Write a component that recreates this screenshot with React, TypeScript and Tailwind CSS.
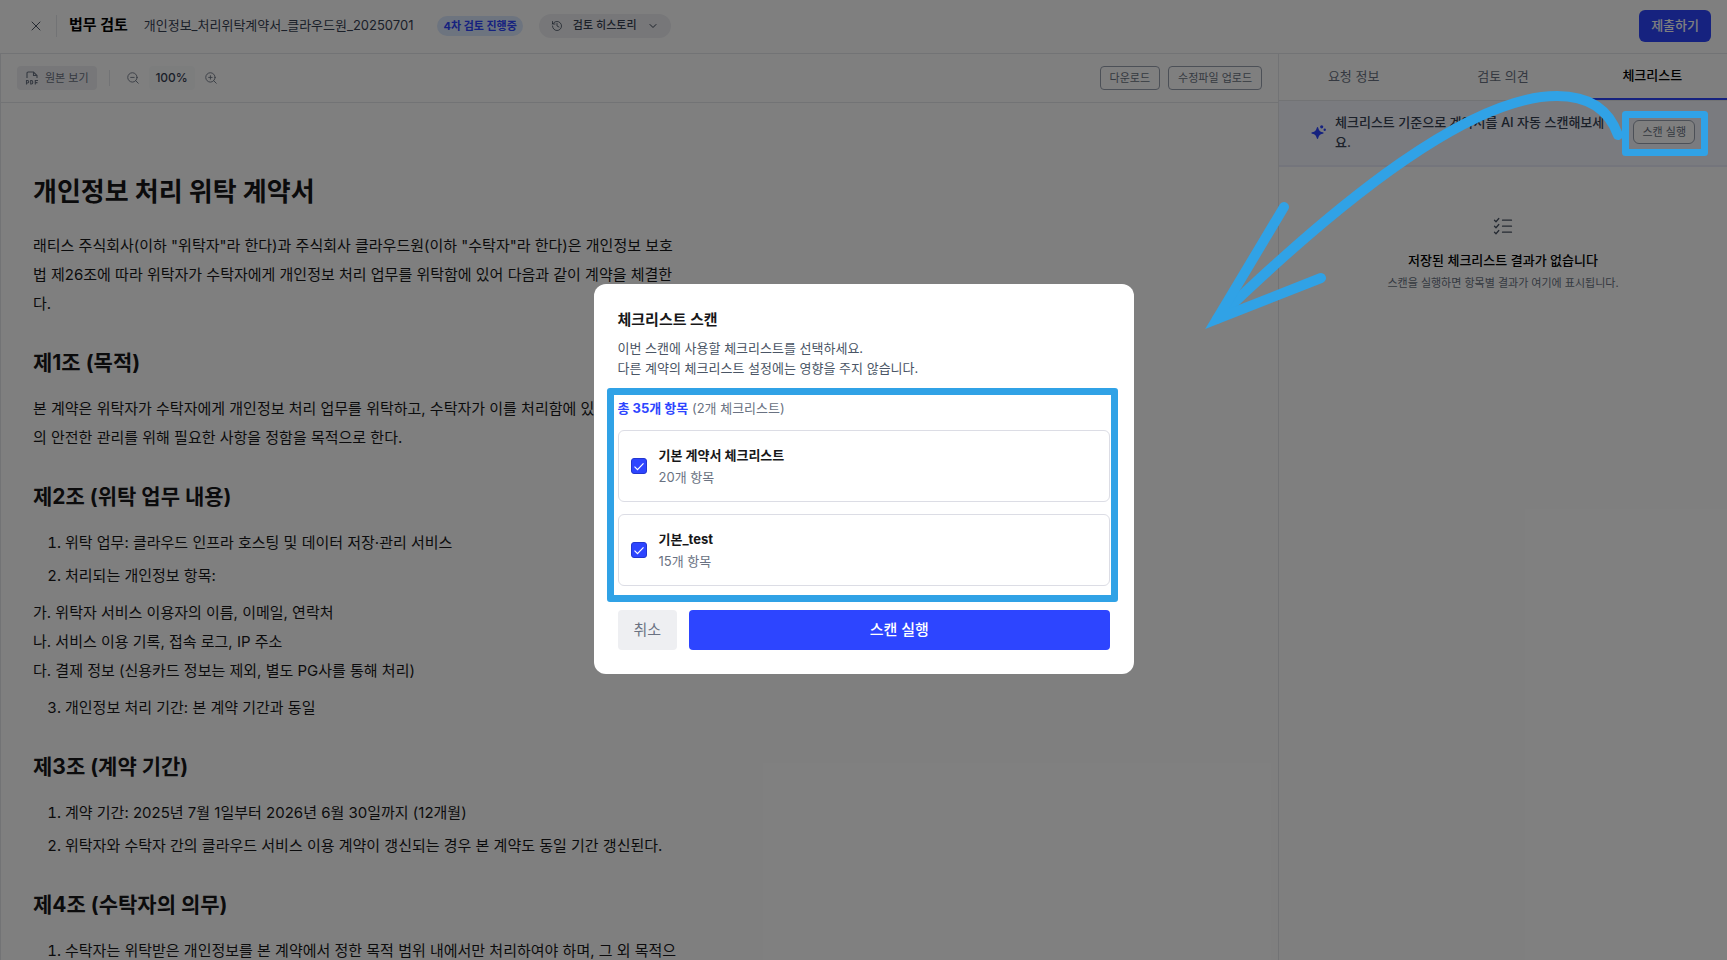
import { useState } from 'react';
import { History, ChevronDown, X, ZoomIn, ZoomOut } from 'lucide-react';

const PAGE_FONT = "font-['Inter','Noto_Sans_CJK_KR',sans-serif]";

const tabs = ['요청 정보', '검토 의견', '체크리스트'];

const checklists = [
  { id: 'default', name: '기본 계약서 체크리스트', count: 20 },
  { id: 'default-test', name: '기본_test', count: 15 },
];

function PdfIcon() {
  return (
    <svg viewBox="0 0 14 14" className="w-[14px] h-[14px]" fill="none" stroke="currentColor" strokeWidth="1.1">
      <path d="M2 7V2.200Q2 1 3.200 1H8.500L12 4.500V7" />
      <path d="M8.500 1v3.500H12" />
      <path d="M1.500 13.500V9.500h1a1.200 1.200 0 0 1 0 2.500h-1M5.700 9.500v3.500h.8c1.700 0 1.700-3.500 0-3.500zM10.300 13.500v-4h2.700M10.300 11.600h2.200" />
    </svg>
  );
}

function SparkleIcon() {
  return (
    <svg viewBox="0 0 16 16" className="w-4 h-4 shrink-0 text-[#2d45ff]" fill="currentColor">
      <path d="M6.500 3q.5 0 .7.800c.8 3 1.500 3.700 4.600 4.500q.8.200.8.700t-.8.700c-3.100.8-3.800 1.500-4.600 4.500q-.2.800-.7.800t-.7-.8c-.8-3-1.500-3.700-4.600-4.500q-.8-.2-.8-.7t.8-.7c3.100-.8 3.800-1.500 4.600-4.500q.2-.8.700-.8z" />
      <circle cx="10.700" cy="2.800" r="1.600" />
      <circle cx="13.700" cy="5.800" r="1.200" />
    </svg>
  );
}

function ChecklistIcon() {
  return (
    <svg viewBox="0 0 20 18" className="w-5 h-[18px] text-gray-600" fill="none" stroke="currentColor" strokeWidth="1.300" strokeLinecap="round" strokeLinejoin="round">
      <path d="M1.500 3.200l1.500 1.500L5.800 1.500M1.500 9.200l1.500 1.500 2.800-3.200M1.500 15.200l1.500 1.500 2.800-3.200" />
      <path d="M9.500 3.200H18.500M9.500 9.200H18.500M9.500 15.200H18.500" />
    </svg>
  );
}

function Header() {
  return (
    <header className="flex items-center h-[54px] pl-7 pr-4 pb-[2px] border-b border-gray-200">
      <button aria-label="닫기" className="text-gray-600">
        <X className="w-4 h-4" strokeWidth={1.5} />
      </button>
      <div className="w-px h-[22px] bg-gray-200 mx-3" />
      <h1 className="text-[15px] font-bold text-black">법무 검토</h1>
      <span className="text-[13px] text-gray-700 ml-4">개인정보_처리위탁계약서_클라우드원_20250701</span>
      <span className="text-[11px] leading-5 font-bold text-[#2d45ff] bg-[#dbe8ff] rounded-full px-[6px] ml-6">4차 검토 진행중</span>
      <button className="flex items-center gap-[10px] h-6 rounded-full bg-[#eeeff2] px-3 ml-4 text-gray-700">
        <History className="w-3 h-3" strokeWidth={1.5} />
        <span className="text-[11px] font-medium">검토 히스토리</span>
        <ChevronDown className="w-3 h-3" />
      </button>
      <button className="h-8 px-3 ml-auto rounded-md bg-[#2d45ff] text-white text-[13px] font-medium">제출하기</button>
    </header>
  );
}

function Toolbar() {
  return (
    <div className="flex items-center h-[49px] px-4 border-b border-gray-200 text-gray-500">
      <button className="flex items-center gap-[6px] h-6 px-2 rounded bg-[#eeeff2] text-[11px]">
        <PdfIcon />
        원본 보기
      </button>
      <div className="w-px h-4 bg-gray-200 mx-3" />
      <button aria-label="축소" className="p-1"><ZoomOut className="w-[14px] h-[14px]" strokeWidth={1.5} /></button>
      <span className="h-6 w-[46px] mx-[5px] rounded bg-gray-50 text-center text-xs leading-6 font-medium text-gray-700">100%</span>
      <button aria-label="확대" className="p-1"><ZoomIn className="w-[14px] h-[14px]" strokeWidth={1.5} /></button>
      <div className="flex gap-2 ml-auto">
        <button className="h-6 px-[9px] rounded border border-gray-400 text-[11px]">다운로드</button>
        <button className="h-6 px-[9px] rounded border border-gray-400 text-[11px]">수정파일 업로드</button>
      </div>
    </div>
  );
}

function Contract() {
  return (
    <article className="flex-1 min-h-0 overflow-hidden px-8 pt-[70px] text-[15px] leading-[29px] text-[#171719] whitespace-nowrap">
      <h2 className="text-[26px] leading-[38px] font-bold">개인정보 처리 위탁 계약서</h2>
      <p className="mt-5">
        래티스 주식회사(이하 "위탁자"라 한다)과 주식회사 클라우드원(이하 "수탁자"라 한다)은 개인정보 보호<br />
        법 제26조에 따라 위탁자가 수탁자에게 개인정보 처리 업무를 위탁함에 있어 다음과 같이 계약을 체결한<br />
        다.
      </p>

      <h3 className="mt-7 text-[21px] leading-[34px] font-bold">제1조 (목적)</h3>
      <p className="mt-[14px]">
        본 계약은 위탁자가 수탁자에게 개인정보 처리 업무를 위탁하고, 수탁자가 이를 처리함에 있어<br />
        의 안전한 관리를 위해 필요한 사항을 정함을 목적으로 한다.
      </p>

      <h3 className="mt-7 text-[21px] leading-[34px] font-bold">제2조 (위탁 업무 내용)</h3>
      <ol className="mt-[14px] pl-8 list-decimal space-y-1">
        <li>위탁 업무: 클라우드 인프라 호스팅 및 데이터 저장·관리 서비스</li>
        <li>처리되는 개인정보 항목:</li>
      </ol>
      <p className="mt-2">
        가. 위탁자 서비스 이용자의 이름, 이메일, 연락처<br />
        나. 서비스 이용 기록, 접속 로그, IP 주소<br />
        다. 결제 정보 (신용카드 정보는 제외, 별도 PG사를 통해 처리)
      </p>
      <ol start={3} className="mt-2 pl-8 list-decimal">
        <li>개인정보 처리 기간: 본 계약 기간과 동일</li>
      </ol>

      <h3 className="mt-7 text-[21px] leading-[34px] font-bold">제3조 (계약 기간)</h3>
      <ol className="mt-[14px] pl-8 list-decimal space-y-1">
        <li>계약 기간: 2025년 7월 1일부터 2026년 6월 30일까지 (12개월)</li>
        <li>위탁자와 수탁자 간의 클라우드 서비스 이용 계약이 갱신되는 경우 본 계약도 동일 기간 갱신된다.</li>
      </ol>

      <h3 className="mt-7 text-[21px] leading-[34px] font-bold">제4조 (수탁자의 의무)</h3>
      <ol className="mt-[14px] pl-8 list-decimal">
        <li>수탁자는 위탁받은 개인정보를 본 계약에서 정한 목적 범위 내에서만 처리하여야 하며, 그 외 목적으</li>
      </ol>
    </article>
  );
}

function Sidebar() {
  return (
    <aside className="w-[449px] shrink-0 border-l border-gray-200">
      <nav className="flex h-[47px] border-b border-gray-200 text-[13px]">
        {tabs.map((tab, i) => (
          <button
            key={tab}
            className={i === 2 ? 'flex-1 border-b-2 border-[#2d45ff] font-medium text-black' : 'flex-1 text-gray-500'}
          >
            {tab}
          </button>
        ))}
      </nav>

      <div className="flex items-center h-[66px] px-8 pb-[2px] bg-[#f4f7ff] border-b-2 border-[#e8ebf8]">
        <SparkleIcon />
        <p className="ml-2 text-[13px] leading-5 font-medium text-gray-700 whitespace-nowrap">
          체크리스트 기준으로 계약서를 AI 자동 스캔해보세<br />요.
        </p>
        <button className="h-6 px-2 ml-auto rounded-md border border-gray-400 bg-white text-[11px] text-gray-500">스캔 실행</button>
      </div>

      <div className="flex flex-col items-center pt-[50px]">
        <ChecklistIcon />
        <p className="mt-[15px] text-[13px] leading-5 font-medium text-black">저장된 체크리스트 결과가 없습니다</p>
        <p className="mt-1 text-[11px] leading-[18px] text-gray-500">스캔을 실행하면 항목별 결과가 여기에 표시됩니다.</p>
      </div>
    </aside>
  );
}

function ScanDialog() {
  const [selected, setSelected] = useState<string[]>(checklists.map((c) => c.id));
  const picked = checklists.filter((c) => selected.includes(c.id));
  const total = picked.reduce((sum, c) => sum + c.count, 0);

  const toggle = (id: string) =>
    setSelected((prev) => (prev.includes(id) ? prev.filter((x) => x !== id) : [...prev, id]));

  return (
    <div role="dialog" aria-labelledby="scan-title" className="w-[540px] rounded-xl bg-white p-6">
      <h2 id="scan-title" className="text-[15px] leading-6 font-bold text-[#171719]">체크리스트 스캔</h2>
      <p className="mt-[6px] text-[13px] leading-5 text-gray-600">
        이번 스캔에 사용할 체크리스트를 선택하세요.<br />
        다른 계약의 체크리스트 설정에는 영향을 주지 않습니다.
      </p>

      <div className="relative mt-5">
        <p className="text-[13px] leading-5 text-gray-500">
          <span className="font-bold text-[#2d45ff]">총 {total}개 항목</span> ({picked.length}개 체크리스트)
        </p>
        <div className="mt-3 space-y-3">
          {checklists.map((c) => (
            <label key={c.id} className="flex items-center h-[72px] px-3 rounded-md border border-[#dcdde5]">
              <span className="grid">
                <input
                  type="checkbox"
                  checked={selected.includes(c.id)}
                  onChange={() => toggle(c.id)}
                  className="peer col-start-1 row-start-1 appearance-none w-4 h-4 rounded-[3px] border border-gray-300 checked:border-[#2336d0] checked:bg-[#2d45ff]"
                />
                <svg viewBox="0 0 16 16" className="col-start-1 row-start-1 w-4 h-4 pointer-events-none text-transparent peer-checked:text-white" fill="none" stroke="currentColor" strokeWidth="1.200">
                  <path d="M3.500 8.700l3 3 6-6.400" />
                </svg>
              </span>
              <span className="ml-3">
                <span className="block text-[13px] leading-[22px] font-bold text-[#171719]">{c.name}</span>
                <span className="block text-[13px] leading-[22px] text-gray-500">{c.count}개 항목</span>
              </span>
            </label>
          ))}
        </div>
        <div className="absolute -left-[11px] -right-2 -top-[10px] -bottom-4 border-[7px] border-[#30a2e6] rounded-[3px] pointer-events-none" />
      </div>

      <div className="flex gap-3 mt-6">
        <button className="h-10 px-4 rounded bg-[#eeeff2] text-[15px] text-gray-500">취소</button>
        <button className="h-10 flex-1 rounded bg-[#2d45ff] text-[15px] font-medium text-white">스캔 실행</button>
      </div>
    </div>
  );
}

function ScanCallout() {
  return (
    <div className="absolute top-0 right-0 pointer-events-none text-[#30a2e6]">
      <svg viewBox="1187 80 540 260" className="w-[540px] h-[260px] mt-20" fill="none" stroke="currentColor" strokeWidth="10" strokeLinecap="round">
        <path d="M1618 135C1608 107 1586 96 1557 96C1470 96 1340 200 1217 319" />
        <path d="M1284 207L1217 319L1321 278" strokeMiterlimit="10" />
        <rect x="1625.500" y="114.500" width="79" height="38" strokeWidth="7" strokeLinejoin="round" />
      </svg>
    </div>
  );
}

export default function App() {
  return (
    <div className={`relative h-screen overflow-hidden bg-white ${PAGE_FONT}`}>
      <div className="flex flex-col h-full">
        <Header />
        <div className="flex flex-1 min-h-0">
          <main className="flex flex-col flex-1 min-w-0 border-l border-gray-200">
            <Toolbar />
            <Contract />
          </main>
          <Sidebar />
        </div>
      </div>

      <div className="absolute inset-0 flex items-center justify-center pb-[2px] bg-black/50">
        <ScanDialog />
      </div>
      <ScanCallout />
    </div>
  );
}
